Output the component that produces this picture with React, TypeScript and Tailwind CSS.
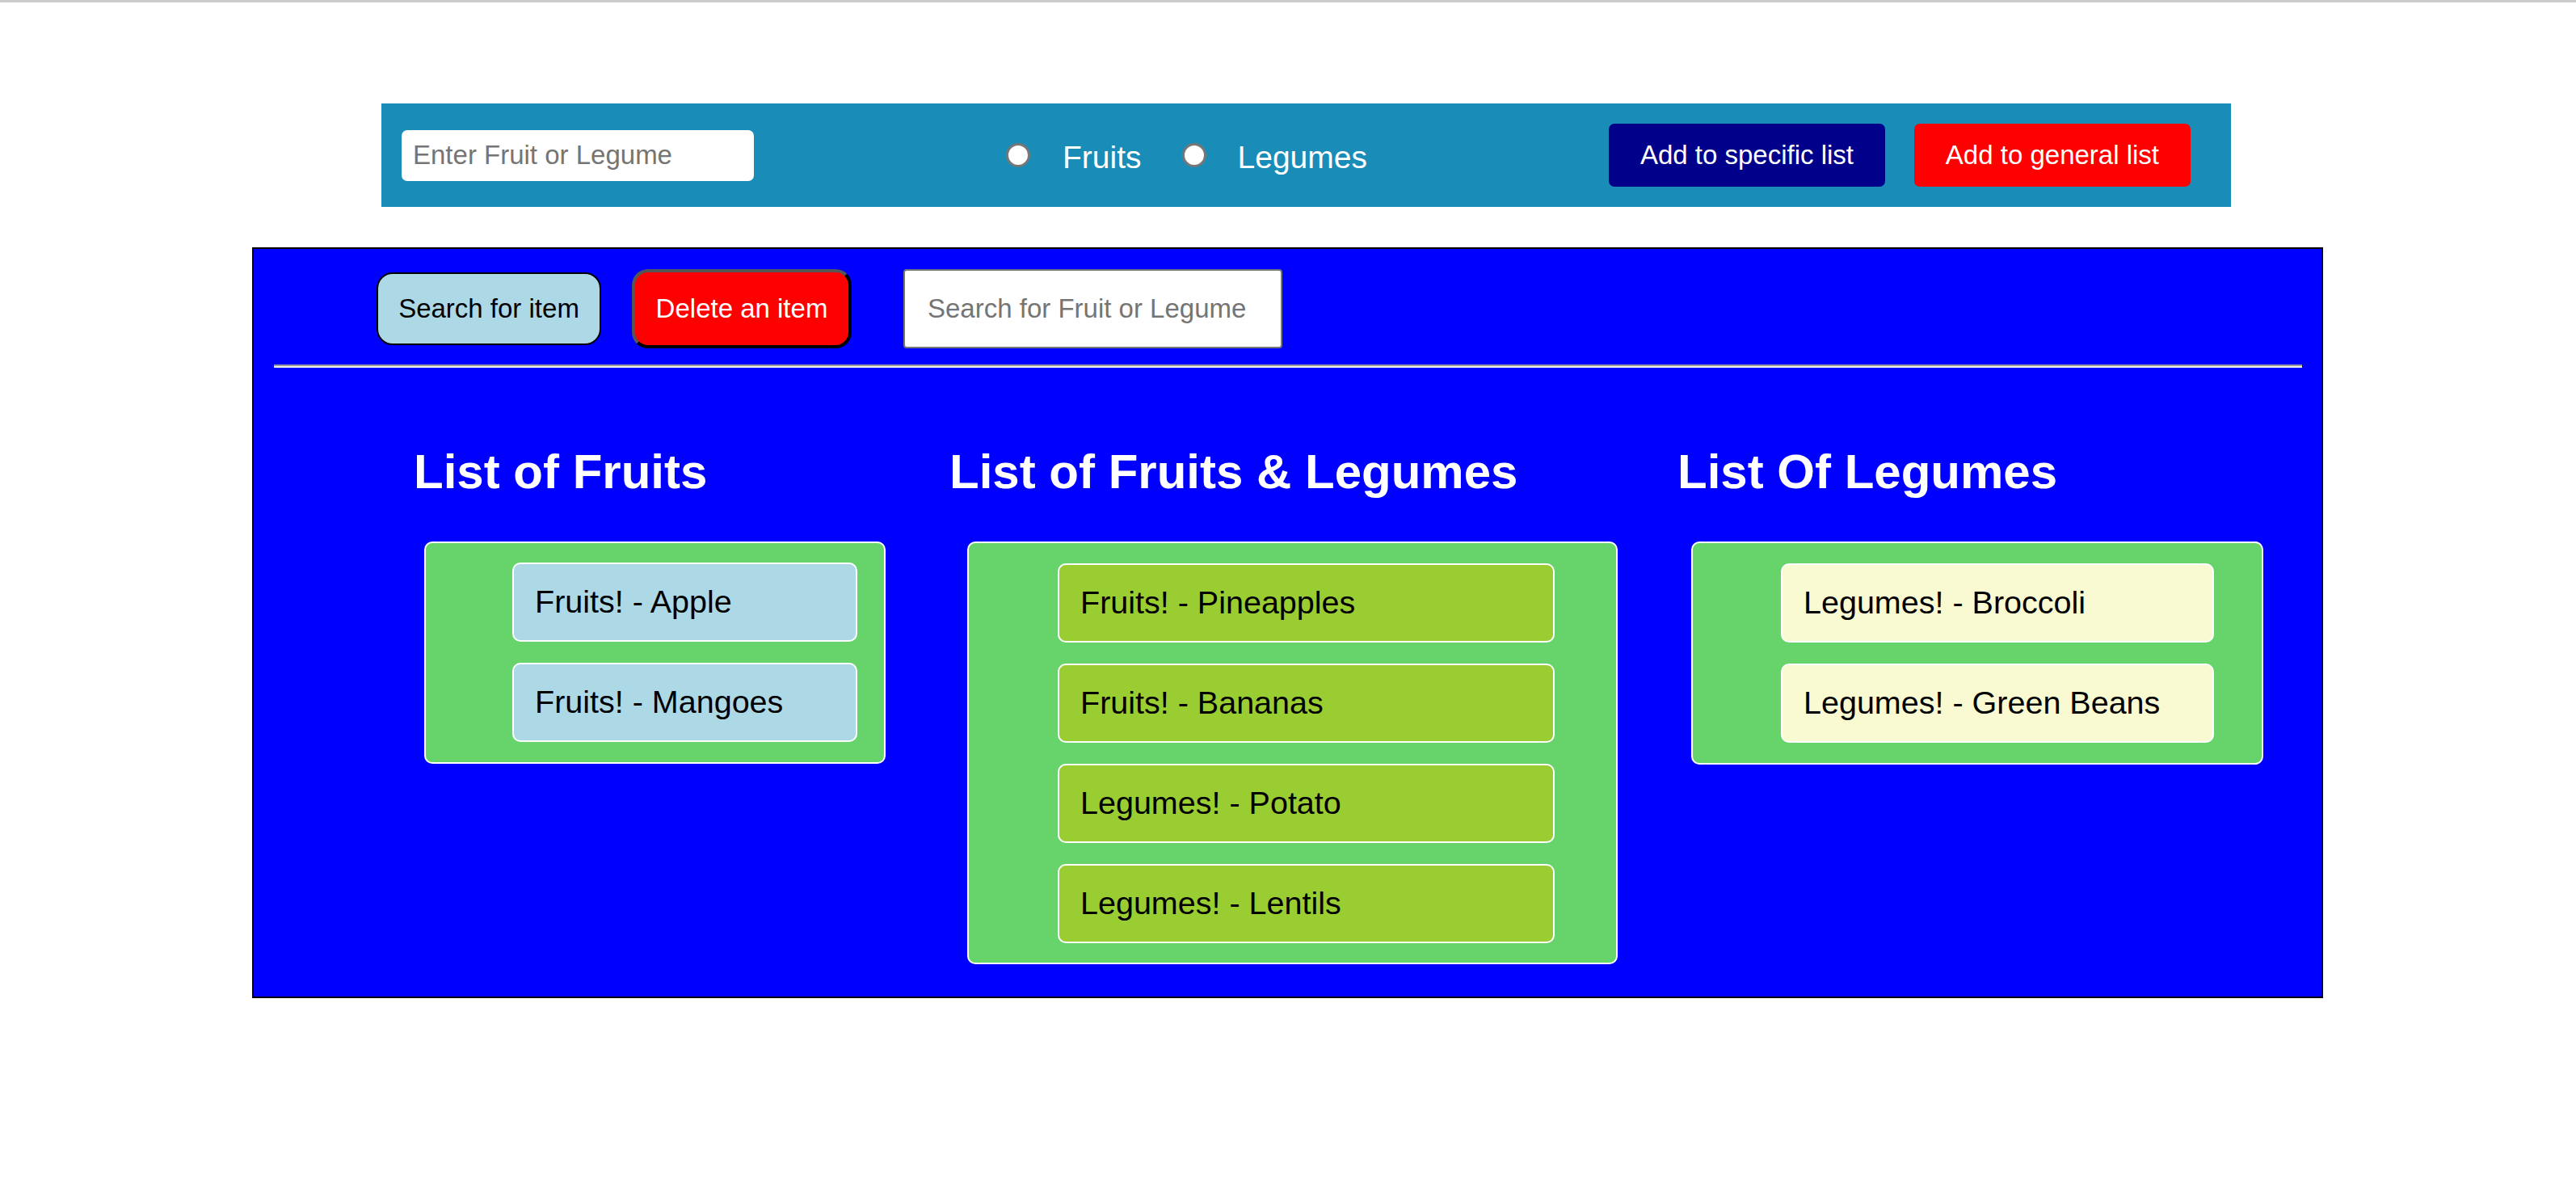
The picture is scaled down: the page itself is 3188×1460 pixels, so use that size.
import React from "react";

const fruits = ["Fruits! - Apple", "Fruits! - Mangoes"];
const general = [
  "Fruits! - Pineapples",
  "Fruits! - Bananas",
  "Legumes! - Potato",
  "Legumes! - Lentils",
];
const legumes = ["Legumes! - Broccoli", "Legumes! - Green Beans"];

function Item({ text, bg, w }: { text: string; bg: string; w: string }) {
  return (
    <li
      className={`flex h-[98px] items-center rounded-[10px] border-2 border-white pl-[26px] text-[39.5px] leading-none text-black ${bg} ${w}`}
    >
      {text}
    </li>
  );
}

export default function App() {
  return (
    <div className="min-h-[1460px] w-[3188px] bg-white font-['Liberation_Sans',Arial,sans-serif]">
      <div className="h-[3px] w-full bg-[#cacbca]" />

      {/* Header bar */}
      <div className="ml-[472px] mt-[125px] flex h-[128px] w-[2289px] items-center bg-[#198cb8]">
        <input
          className="ml-[25px] h-[63px] w-[436px] rounded-[7px] bg-white pl-[14px] text-[33px] text-black outline-none placeholder:text-[#757575]"
          placeholder="Enter Fruit or Legume"
        />
        <div className="ml-[312px] flex items-center">
          <span className="h-[30px] w-[30px] rounded-full border-[3px] border-[#767676] bg-white" />
          <span className="ml-[40px] mt-[4px] text-[39px] leading-none text-white">Fruits</span>
          <span className="ml-[50px] h-[30px] w-[30px] rounded-full border-[3px] border-[#767676] bg-white" />
          <span className="ml-[39px] mt-[4px] text-[39px] leading-none text-white">Legumes</span>
        </div>
        <button className="ml-[299px] flex h-[78px] w-[342px] items-center justify-center rounded-[7px] bg-[#00008b] text-[33px] text-white">
          Add to specific list
        </button>
        <button className="ml-[36px] flex h-[78px] w-[342px] items-center justify-center rounded-[7px] bg-[#ff0000] text-[33px] text-white">
          Add to general list
        </button>
      </div>

      {/* Main panel */}
      <div className="ml-[312px] mt-[50px] box-border h-[929px] w-[2563px] border-2 border-black bg-[#0000ff]">
        <div className="ml-[152px] mt-[25px] flex h-[98px] items-center">
          <button className="box-border flex h-[90px] w-[278px] items-center justify-center rounded-[20px] border-2 border-black bg-[#add8e6] text-[33px] text-black">
            Search for item
          </button>
          <button className="ml-[38px] box-border flex h-[98px] w-[272px] items-center justify-center rounded-[20px] border-4 border-b-black border-l-[#555555] border-r-black border-t-[#555555] bg-[#ff0000] text-[33px] text-white">
            Delete an item
          </button>
          <input
            className="ml-[64px] box-border h-[98px] w-[469px] rounded-[4px] border-2 border-[#767676] bg-white pl-[28px] text-[33px] text-black outline-none placeholder:text-[#757575]"
            placeholder="Search for Fruit or Legume"
          />
        </div>

        <div className="ml-[25px] mr-[24px] mt-[20px] h-[4px] border-b-2 border-t-2 border-b-[#eeeeee] border-t-[#9a9a9a]" />

        <div className="mt-[95px] flex pl-[198px]">
          <div className="w-[663px] shrink-0">
            <div className="text-[60px] font-bold leading-[68px] text-white">List of Fruits</div>
            <ul className="ml-[13px] mt-[52px] flex w-[571px] flex-col gap-[26px] rounded-[10px] border-2 border-white bg-[#66d46a] pb-[25px] pl-[107px] pt-[24px]">
              {fruits.map((t) => (
                <Item key={t} text={t} bg="bg-[#add8e6]" w="w-[427px]" />
              ))}
            </ul>
          </div>
          <div className="w-[901px] shrink-0">
            <div className="text-[60px] font-bold leading-[68px] text-white">List of Fruits &amp; Legumes</div>
            <ul className="ml-[22px] mt-[52px] flex w-[805px] flex-col gap-[26px] rounded-[10px] border-2 border-white bg-[#66d46a] pb-[24px] pl-[110px] pt-[25px]">
              {general.map((t) => (
                <Item key={t} text={t} bg="bg-[#9acd32]" w="w-[615px]" />
              ))}
            </ul>
          </div>
          <div className="shrink-0">
            <div className="text-[60px] font-bold leading-[68px] text-white">List Of Legumes</div>
            <ul className="ml-[17px] mt-[52px] flex w-[708px] flex-col gap-[26px] rounded-[10px] border-2 border-white bg-[#66d46a] pb-[25px] pl-[109px] pt-[25px]">
              {legumes.map((t) => (
                <Item key={t} text={t} bg="bg-[#fafad2]" w="w-[536px]" />
              ))}
            </ul>
          </div>
        </div>
      </div>
    </div>
  );
}
